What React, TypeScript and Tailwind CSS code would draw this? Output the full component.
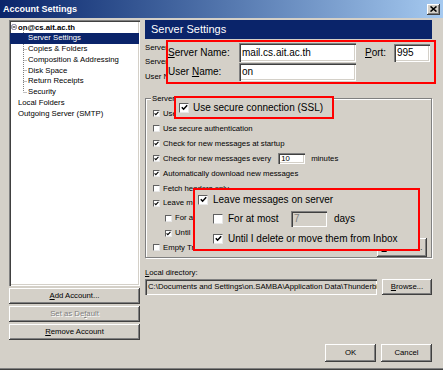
import React from "react";

const raised =
  "bg-[#d4d0c8] shadow-[inset_-1px_-1px_#404040,inset_1px_1px_#ffffff,inset_-2px_-2px_#808080,inset_2px_2px_#d4d0c8]";
const sunkenWhite =
  "bg-white shadow-[inset_1px_1px_#808080,inset_2px_2px_#404040,inset_-1px_-1px_#ffffff,inset_-2px_-2px_#d4d0c8]";
const sunkenGray =
  "bg-[#d4d0c8] shadow-[inset_1px_1px_#808080,inset_2px_2px_#404040,inset_-1px_-1px_#ffffff,inset_-2px_-2px_#d4d0c8]";

function Tick({ s }: { s: number }) {
  return (
    <svg width={s} height={s} viewBox="0 0 7 7" className="block">
      <path d="M0.8 3.2 L2.6 5.2 L6.2 1.2" fill="none" stroke="#000" strokeWidth="1.5" />
    </svg>
  );
}

function SmallCB({ checked }: { checked?: boolean }) {
  return (
    <span className="w-[7px] h-[7px] shrink-0 bg-white border border-t-[#606060] border-l-[#606060] border-r-[#e8e8e8] border-b-[#e8e8e8] flex items-center justify-center">
      {checked && <Tick s={5} />}
    </span>
  );
}

function BigCB({ checked }: { checked?: boolean }) {
  return (
    <span className="w-[10px] h-[10px] shrink-0 bg-white border border-t-[#606060] border-l-[#606060] border-r-[#e8e8e8] border-b-[#e8e8e8] flex items-center justify-center">
      {checked && <Tick s={7} />}
    </span>
  );
}

function Row({ checked, children, indent }: { checked?: boolean; children: React.ReactNode; indent?: boolean }) {
  return (
    <div className={indent ? "h-[14.9px] flex items-center gap-[3px] pl-[12px]" : "h-[14.9px] flex items-center gap-[3px]"}>
      <SmallCB checked={checked} />
      <span className="whitespace-nowrap">{children}</span>
    </div>
  );
}

export default function App() {
  const treeChildren = [
    "Server Settings",
    "Copies & Folders",
    "Composition & Addressing",
    "Disk Space",
    "Return Receipts",
    "Security",
  ];
  return (
    <div className="w-[443px] h-[370px] relative overflow-hidden bg-[#d4d0c8] text-black font-['Liberation_Sans',Arial,sans-serif] text-[7.75px] leading-none shadow-[inset_0_-1px_#404040,inset_0_-2px_#808080]">
      {/* Title bar */}
      <div className="h-[18px] flex items-center justify-between pl-[3px] pr-[3px] bg-linear-to-r from-[#0a246a] to-[#a6caf0]">
        <span className="text-white font-bold text-[9px]">Account Settings</span>
        <div className={"w-[13px] h-[11px] flex items-center justify-center " + raised}>
          <svg width="7" height="6" viewBox="0 0 7 6">
            <path d="M0.5 0.5 L6.5 5.5 M6.5 0.5 L0.5 5.5" stroke="#000" strokeWidth="1.6" />
          </svg>
        </div>
      </div>

      {/* Body */}
      <div className="flex pt-[2px] pl-[9px]">
        {/* Left column */}
        <div className="w-[131px] flex flex-col">
          <div className="h-[266px] relative bg-white shadow-[inset_1px_1px_#808080,inset_2px_2px_#404040,inset_-1px_-1px_#ffffff,inset_-2px_-2px_#d4d0c8] pt-[2px] px-[1px]">
            <svg className="absolute left-0 top-0" width="131" height="100">
              <line x1="14.5" y1="10" x2="14.5" y2="72" stroke="#808080" strokeDasharray="1 1" />
              {[18, 29, 40, 50, 61, 72].map((y) => (
                <line key={y} x1="14.5" y1={y + 0.5} x2="18" y2={y + 0.5} stroke={y === 18 ? "#ffffff" : "#808080"} strokeDasharray="1 1" />
              ))}
            </svg>
            <div className="h-[10.75px] flex items-center pl-[1px] gap-[1px]">
              <svg width="6" height="6" viewBox="0 0 6 6" className="shrink-0">
                <rect x="0.5" y="0.5" width="5" height="5" rx="2" fill="#fff" stroke="#7a7a9a" />
                <line x1="1.5" y1="3" x2="4.5" y2="3" stroke="#000" />
              </svg>
              <span className="font-bold">on@cs.ait.ac.th</span>
            </div>
            {treeChildren.map((t, i) => (
              <div
                key={t}
                className={
                  i === 0
                    ? "h-[10.75px] flex items-center pl-[18px] bg-[#0a246a] text-white relative"
                    : "h-[10.75px] flex items-center pl-[18px] relative"
                }
              >
                {t}
              </div>
            ))}
            <div className="h-[10.75px] flex items-center pl-[8px]">Local Folders</div>
            <div className="h-[10.75px] flex items-center pl-[8px]">Outgoing Server (SMTP)</div>
          </div>
          <div className="flex flex-col gap-[2px] mt-[2px]">
            <div className={"h-[16px] flex items-center justify-center " + raised}>
              <span>
                <span className="underline">A</span>dd Account...
              </span>
            </div>
            <div className={"h-[16px] flex items-center justify-center text-[#808080] " + raised}>
              <span className="[text-shadow:1px_1px_#ffffff]">
                Set as De<span className="underline">f</span>ault
              </span>
            </div>
            <div className={"h-[16px] flex items-center justify-center " + raised}>
              <span>
                <span className="underline">R</span>emove Account
              </span>
            </div>
          </div>
        </div>

        {/* Right column */}
        <div className="w-[287px] ml-[5px] flex flex-col">
          <div className="h-[19px] bg-[#0a246a] text-white text-[11px] flex items-center pl-[6px]">Server Settings</div>
          <div className="mt-[2px] flex flex-col">
            <div className="h-[14px] flex items-center">Server Type:&nbsp;&nbsp;&nbsp;POP Mail Server</div>
            <div className="h-[14px] flex items-center">Server Name:</div>
            <div className="h-[16px] flex items-center">User Name:</div>
          </div>
          <div className="mt-[13px] h-[160px] relative border border-[#808080] shadow-[inset_1px_1px_#ffffff,1px_1px_#ffffff] pt-[7.5px] pl-[7px] pr-[4px]">
            <span className="absolute left-[5px] top-[-4px] bg-[#d4d0c8] px-[1px]">Server Settings</span>
            <Row checked>Use secure connection (SSL)</Row>
            <Row>Use secure authentication</Row>
            <Row checked>Check for new messages at startup</Row>
            <div className="h-[14.9px] flex items-center gap-[3px]">
              <SmallCB checked />
              <span className="whitespace-nowrap">Check for new messages every</span>
              <div className={"ml-[4px] w-[27px] h-[11px] flex items-center pl-[3px] " + sunkenWhite}>10</div>
              <span className="ml-[3px]">minutes</span>
            </div>
            <Row checked>Automatically download new messages</Row>
            <Row>Fetch headers only</Row>
            <Row checked>Leave messages on server</Row>
            <Row indent>For at most 7 days</Row>
            <Row indent checked>Until I delete or move them from Inbox</Row>
            <div className="h-[14.9px] flex items-center justify-between">
              <div className="flex items-center gap-[3px]">
                <SmallCB />
                <span>Empty Trash on Exit</span>
              </div>
              <div className={"w-[50px] h-[19px] -my-[2px] flex items-center justify-center " + raised}>
                <span>
                  <span className="underline">A</span>dvanced...
                </span>
              </div>
            </div>
          </div>
          <div className="mt-[9px] h-[11px] flex items-center">
            <span>
              <span className="underline">L</span>ocal directory:
            </span>
          </div>
          <div className="mt-[1px] h-[16px] flex gap-[5px]">
            <div className={"w-[232px] h-[16px] flex items-center pl-[3px] overflow-hidden whitespace-nowrap " + sunkenGray}>
              {"C:\\Documents and Settings\\on.SAMBA\\Application Data\\Thunderbird\\Profiles"}
            </div>
            <div className={"w-[50px] h-[16px] flex items-center justify-center " + raised}>
              <span>
                <span className="underline">B</span>rowse...
              </span>
            </div>
          </div>
          <div className="mt-[49px] h-[18px] flex justify-end gap-[5px]">
            <div className={"w-[51px] h-[18px] flex items-center justify-center " + raised}>OK</div>
            <div className={"w-[51px] h-[18px] flex items-center justify-center " + raised}>Cancel</div>
          </div>
        </div>
      </div>

      {/* Callout 1 */}
      <div className="absolute left-[166px] top-[40px] w-[270px] h-[44px] border-2 border-[#ff0000] bg-[#d4d0c8] flex flex-col pt-[1px] gap-[1px] text-[10px]">
        <div className="flex items-center h-[19px]">
          <span className="w-[71px] whitespace-nowrap">
            <span className="underline">S</span>erver Name:
          </span>
          <div className={"w-[117px] h-[19px] flex items-center pl-[3px] " + sunkenWhite}>mail.cs.ait.ac.th</div>
          <span className="ml-[9px] w-[29px]">
            <span className="underline">P</span>ort:
          </span>
          <div className={"w-[36px] h-[18px] flex items-center pl-[3px] " + sunkenWhite}>995</div>
        </div>
        <div className="flex items-center h-[18px]">
          <span className="w-[71px] whitespace-nowrap">
            User <span className="underline">N</span>ame:
          </span>
          <div className={"w-[117px] h-[18px] flex items-center pl-[3px] " + sunkenWhite}>on</div>
        </div>
      </div>

      {/* Callout 2 */}
      <div className="absolute left-[174px] top-[96px] w-[160px] h-[23px] border-2 border-[#ff0000] bg-[#d4d0c8] flex items-center pl-[3px] gap-[4px] text-[10px]">
        <BigCB checked />
        <span className="whitespace-nowrap">Use secure connection (SSL)</span>
      </div>

      {/* Callout 3 */}
      <div className="absolute left-[193px] top-[188px] w-[227px] h-[63px] border-2 border-[#ff0000] bg-[#d4d0c8] flex flex-col pl-[3px] text-[10px]">
        <div className="h-[19.5px] flex items-center gap-[5px]">
          <BigCB checked />
          <span className="whitespace-nowrap">Leave messages on server</span>
        </div>
        <div className="h-[19.5px] flex items-center pl-[15px]">
          <BigCB />
          <span className="ml-[5px] w-[63px] whitespace-nowrap">For at most</span>
          <div className={"w-[36px] h-[16px] flex items-center pl-[3px] text-[#808080] " + sunkenGray}>7</div>
          <span className="ml-[7px]">days</span>
        </div>
        <div className="h-[19.5px] flex items-center pl-[15px] gap-[5px]">
          <BigCB checked />
          <span className="whitespace-nowrap">Until I delete or move them from Inbox</span>
        </div>
      </div>
    </div>
  );
}
